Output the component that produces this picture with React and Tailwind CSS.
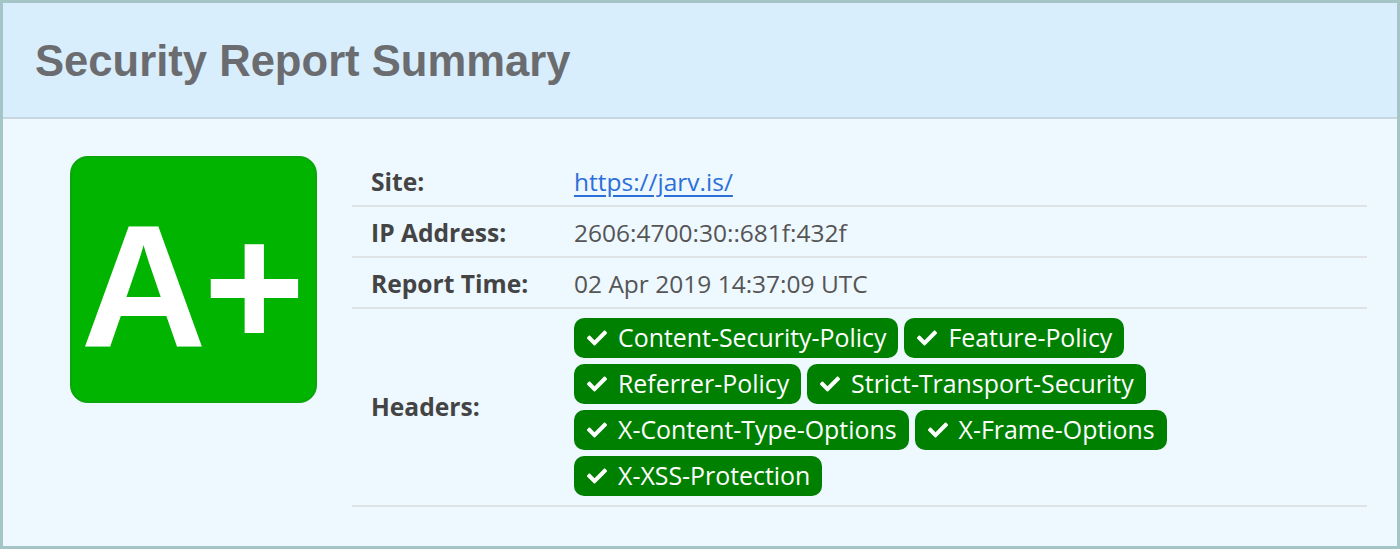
const headers = [
  'Content-Security-Policy',
  'Feature-Policy',
  'Referrer-Policy',
  'Strict-Transport-Security',
  'X-Content-Type-Options',
  'X-Frame-Options',
  'X-XSS-Protection',
];

const CheckIcon = () => (
  <svg viewBox="0 0 512 512" className="w-[20px] h-[20px] fill-white shrink-0">
    <path d="M173.898 439.404l-166.4-166.4c-9.997-9.997-9.997-26.206 0-36.204l36.203-36.204c9.997-9.998 26.207-9.998 36.204 0L192 312.69 432.095 72.596c9.997-9.997 26.207-9.997 36.204 0l36.203 36.204c9.997 9.997 9.997 26.206 0 36.204l-294.4 294.401c-9.998 9.997-26.207 9.997-36.204-.001z" />
  </svg>
);

export default function App() {
  return (
    <div className="w-[1400px] h-[549px] border-[3px] border-[#a4c4c6] bg-[#eef8ff] flex flex-col" style={{ fontFamily: '"Open Sans", sans-serif' }}>
      <div className="h-[116px] shrink-0 bg-[#d9eefd] border-b-2 border-[#c6d5de] flex items-center pl-[32px]">
        <h1 className="text-[43.6px] font-bold text-[#6b6c70] pt-[3px]" style={{ fontFamily: '"Liberation Sans", Arial, sans-serif' }}>
          Security Report Summary
        </h1>
      </div>
      <div className="flex pt-[37px] pl-[67px] pr-[30px]">
        <div
          className="w-[247px] h-[247px] shrink-0 rounded-[18px] bg-[#00b400] border-2 border-[#0aa60a] flex items-center justify-center text-white font-bold text-[174px] leading-none pt-[14px]"
          style={{ fontFamily: '"Liberation Sans", Arial, sans-serif' }}
        >
          <span className="tracking-[-3px] pr-[4px]">A+</span>
        </div>
        <div className="flex-1 ml-[35px]">
          <div className="h-[51px] flex items-center border-b-2 border-[#dfe3e6] pt-[3px]">
            <div className="w-[222px] shrink-0 pl-[19px] font-bold text-[24.6px] text-[#444]">Site:</div>
            <a href="#" className="text-[24.5px] text-[#2c6fd9] underline underline-offset-[4px]">https://jarv.is/</a>
          </div>
          <div className="h-[51px] flex items-center border-b-2 border-[#dfe3e6] pt-[3px]">
            <div className="w-[222px] shrink-0 pl-[19px] font-bold text-[24.6px] text-[#444]">IP Address:</div>
            <div className="text-[24.5px] text-[#555]">2606:4700:30::681f:432f</div>
          </div>
          <div className="h-[51px] flex items-center border-b-2 border-[#dfe3e6] pt-[3px]">
            <div className="w-[222px] shrink-0 pl-[19px] font-bold text-[24.6px] text-[#444]">Report Time:</div>
            <div className="text-[24.5px] text-[#555]">02 Apr 2019 14:37:09 UTC</div>
          </div>
          <div className="flex items-center border-b-2 border-[#dfe3e6] pt-[9px] pb-[9px]">
            <div className="w-[222px] shrink-0 pl-[19px] font-bold text-[24.6px] text-[#444]">Headers:</div>
            <div className="flex flex-wrap gap-x-[6px] gap-y-[6px] w-[600px]">
              {headers.map((h) => (
                <span key={h} className="h-[40px] flex items-center gap-[11px] bg-[#008000] text-white text-[24.9px] rounded-[10px] pl-[13px] pr-[12px]">
                  <CheckIcon />
                  {h}
                </span>
              ))}
            </div>
          </div>
        </div>
      </div>
    </div>
  );
}
